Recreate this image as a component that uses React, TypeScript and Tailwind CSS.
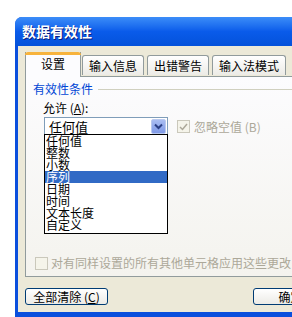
const font = { fontFamily: '"Noto Sans CJK SC", "Noto Sans", sans-serif' };

const items = ["任何值", "整数", "小数", "序列", "日期", "时间", "文本长度", "自定义"];

function Tab({ label, width, active }: { label: string; width: string; active?: boolean }) {
  if (active) {
    return (
      <div className={`relative z-10 flex h-[25px] ${width} items-start justify-center border-x border-[#919B9C] bg-[#FCFCFE] pt-[3px] text-[12px] leading-[16px] text-black`}>
        <div className="absolute -left-px -right-px top-0 h-[3px] rounded-t-[3px] bg-[#F7B33C]" />
        <span className="mt-[1px]">{label}</span>
      </div>
    );
  }
  return (
    <div className={`mt-[3px] flex h-[20px] ${width} items-center justify-center rounded-t-[3px] border border-b-0 border-[#919B9C] bg-gradient-to-b from-white to-[#ECEBE6] text-[12px] text-black`}>
      {label}
    </div>
  );
}

function Check({ className = "" }: { className?: string }) {
  return (
    <div className={`h-[13px] w-[13px] shrink-0 border border-[#CAC8BB] bg-[#F5F4EA] ${className}`} />
  );
}

export default function App() {
  return (
    <div className="relative h-[317px] w-[292px] overflow-hidden bg-white pl-[15px] pt-[17px]" style={font}>
      <div className="flex h-[303px] w-[320px] flex-col rounded-t-[7px] bg-[#0A4FDD]">
        {/* title bar */}
        <div className="flex h-[29px] items-center rounded-t-[7px] bg-gradient-to-b from-[#3C8DF8] via-[#0A5BEA] to-[#0452DA] pl-[7px] text-[14px] font-bold text-white [text-shadow:1px_1px_0_#0A1E80]">
          数据有效性
        </div>

        {/* body */}
        <div className="mb-[8px] ml-[3px] flex flex-1 flex-col bg-[#ECE9D8] pl-[7px] pt-[6px]">
          <div className="flex items-start">
            <Tab label="设置" width="w-[56px]" active />
            <div className="w-[1px]" />
            <Tab label="输入信息" width="w-[62px]" />
            <div className="w-[3px]" />
            <Tab label="出错警告" width="w-[62px]" />
            <div className="w-[3px]" />
            <Tab label="输入法模式" width="w-[74px]" />
          </div>

          {/* panel */}
          <div className="relative -mt-px h-[201px] border border-[#919B9C] bg-gradient-to-b from-[#FCFCFE] to-[#F4F3EE]">
            <div className="flex items-center pl-[7px] pt-[5px]">
              <span className="text-[12px] leading-[14px] text-[#0046D5]">有效性条件</span>
              <div className="ml-[5px] h-px flex-1 bg-[#D0D0BF]" />
            </div>

            <div className="pl-[17px] pt-[5px] text-[12px] leading-[14px] text-black">
              允许 (<span className="underline">A</span>):
            </div>

            <div className="mt-[2px] flex items-center pl-[18px]">
              <div className="flex h-[19px] w-[124px] items-center border border-[#7F9DB9] bg-white">
                <span className="flex-1 pl-[4px] text-[13px] leading-[16px] text-black">任何值</span>
                <div className="mr-px flex h-[15px] w-[15px] items-center justify-center rounded-[2px] border border-[#B9C9EF] bg-gradient-to-b from-[#A9BDF2] to-[#7F99E6]">
                  <svg width="9" height="7" viewBox="0 0 9 7">
                    <path d="M1 1.5 L4.5 5 L8 1.5" fill="none" stroke="#2A3F84" strokeWidth="2" />
                  </svg>
                </div>
              </div>
              <div className="relative ml-[9px] flex items-center">
                <Check />
                <svg width="9" height="8" viewBox="0 0 9 8" className="absolute left-[2px] top-[3px]">
                  <path d="M1 4 L3.5 6.5 L8 1" fill="none" stroke="#ACA899" strokeWidth="1.5" />
                </svg>
              </div>
              <span className="ml-[4px] text-[12px] text-[#ACA899]">忽略空值 (B)</span>
            </div>

            {/* dropdown list lies over the panel */}
            <div className="absolute left-[18px] top-[57px] z-10 w-[124px] border border-black bg-white pb-[2px]">
              {items.map((item) => (
                <div
                  key={item}
                  className={`h-[12px] pl-[1px] text-[12px] leading-[12px] ${
                    item === "序列" ? "bg-[#316AC5] text-white" : "text-black"
                  }`}
                >
                  {item}
                </div>
              ))}
            </div>

            <div className="absolute left-[9px] top-[177px] flex items-center gap-[3px] text-[12px] text-[#ACA899]">
              <Check />
              <span className="whitespace-nowrap">对有同样设置的所有其他单元格应用这些更改</span>
            </div>
          </div>

          {/* buttons */}
          <div className="mt-[11px] flex items-center">
            <div className="flex h-[17px] w-[83px] items-center justify-center rounded-[3px] border border-[#003C74] bg-gradient-to-b from-white to-[#ECEBE6] text-[12px] text-black">
              全部清除 (<span className="underline">C</span>)
            </div>
            <div className="ml-[145px] flex h-[17px] w-[75px] items-center justify-center rounded-[3px] border border-[#003C74] bg-gradient-to-b from-white to-[#ECEBE6] text-[12px] text-black">
              确定
            </div>
          </div>
          <div className="flex-1" />
        </div>
      </div>
    </div>
  );
}
